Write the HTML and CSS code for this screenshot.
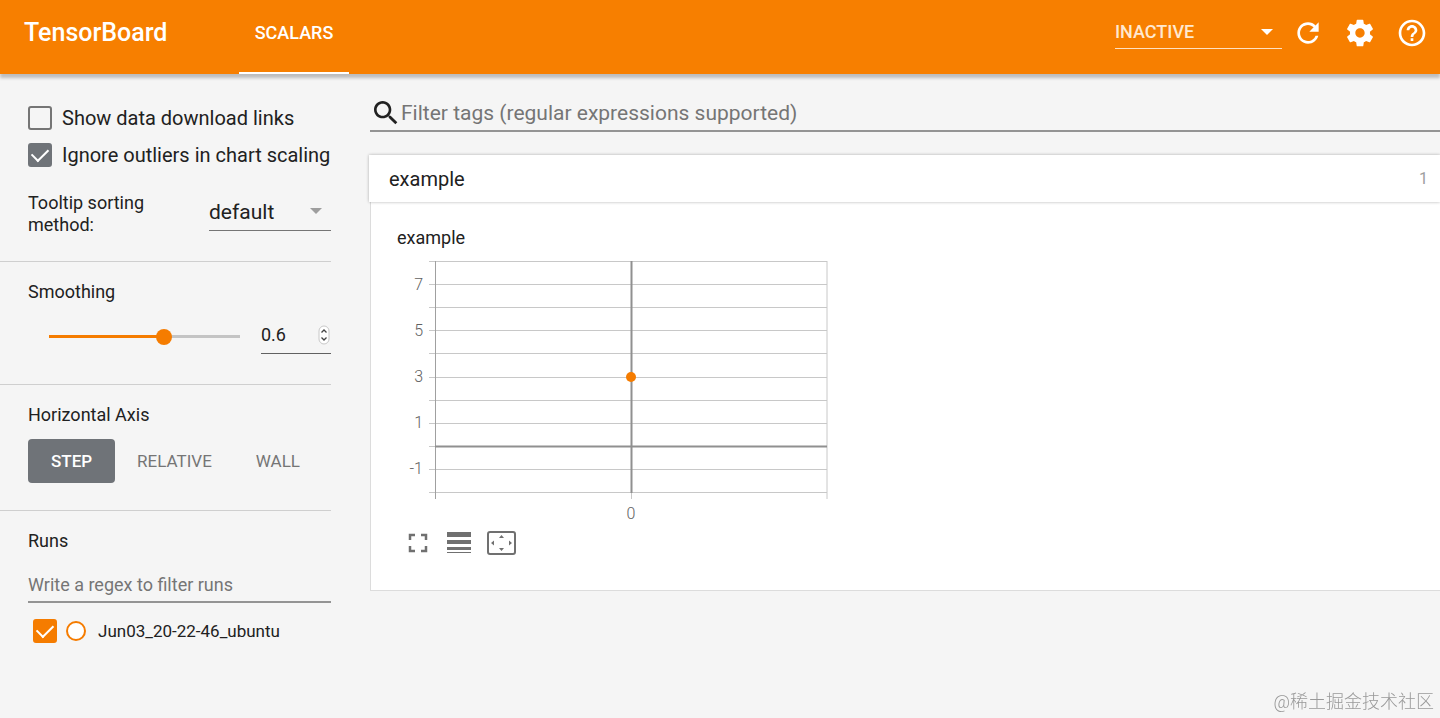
FILE: index.html
```html
<!DOCTYPE html>
<html lang="en">
<head>
    <meta charset="utf-8">
    <title>TensorBoard</title>
    <link rel="stylesheet" href="styles.css">
</head>
<body>
  <header class="toolbar">
    <h1 class="brand">TensorBoard</h1>
    <nav class="tabs">
      <a class="tab active" href="#scalars">SCALARS</a>
    </nav>
    <div class="dropdown inactive-menu">
      <select id="plugins" aria-label="Inactive plugins">
        <option>INACTIVE</option>
      </select>
      <svg class="arrow" viewBox="0 0 12 6"><path d="M0 0h12L6 6z"/></svg>
    </div>
    <div class="actions">
      <button type="button" aria-label="Reload">
        <svg viewBox="0 0 24 24"><path d="M17.65 6.35C16.2 4.9 14.21 4 12 4c-4.42 0-7.99 3.58-7.99 8s3.57 8 7.99 8c3.73 0 6.84-2.55 7.73-6h-2.08c-.82 2.33-3.04 4-5.65 4-3.31 0-6-2.69-6-6s2.69-6 6-6c1.66 0 3.14.69 4.22 1.78L13 11h7V4l-2.35 2.35z"/></svg>
      </button>
      <button type="button" aria-label="Settings">
        <svg viewBox="0 0 24 24"><path d="M19.43 12.98c.04-.32.07-.64.07-.98s-.03-.66-.07-.98l2.11-1.65c.19-.15.24-.42.12-.64l-2-3.46c-.12-.22-.39-.3-.61-.22l-2.49 1c-.52-.4-1.08-.73-1.69-.98l-.38-2.65C14.46 2.18 14.25 2 14 2h-4c-.25 0-.46.18-.49.42l-.38 2.65c-.61.25-1.17.59-1.69.98l-2.49-1c-.23-.09-.49 0-.61.22l-2 3.46c-.13.22-.07.49.12.64l2.11 1.65c-.04.32-.07.65-.07.98s.03.66.07.98l-2.11 1.65c-.19.15-.24.42-.12.64l2 3.46c.12.22.39.3.61.22l2.49-1c.52.4 1.08.73 1.69.98l.38 2.65c.03.24.24.42.49.42h4c.25 0 .46-.18.49-.42l.38-2.65c.61-.25 1.17-.59 1.69-.98l2.49 1c.23.09.49 0 .61-.22l2-3.46c.12-.22.07-.49-.12-.64l-2.11-1.65zM12 15.5c-1.93 0-3.5-1.57-3.5-3.5s1.57-3.5 3.5-3.5 3.5 1.57 3.5 3.5-1.57 3.5-3.5 3.5z"/></svg>
      </button>
      <button type="button" aria-label="Help">
        <svg viewBox="0 0 24 24"><path d="M11 18h2v-2h-2v2zm1-16C6.48 2 2 6.48 2 12s4.48 10 10 10 10-4.48 10-10S17.52 2 12 2zm0 18c-4.41 0-8-3.59-8-8s3.59-8 8-8 8 3.59 8 8-3.59 8-8 8zm0-14c-2.21 0-4 1.79-4 4h2c0-1.1.9-2 2-2s2 .9 2 2c0 2-3 1.75-3 5h2c0-2.25 3-2.5 3-5 0-2.21-1.79-4-4-4z"/></svg>
      </button>
    </div>
  </header>

  <div class="content">
    <aside class="sidebar">
      <section class="options">
        <div class="check-row">
          <input type="checkbox" id="downloadLinks">
          <label for="downloadLinks">Show data download links</label>
        </div>
        <div class="check-row">
          <input type="checkbox" id="outliers" checked>
          <label for="outliers">Ignore outliers in chart scaling</label>
        </div>
        <div class="tooltip-row">
          <label for="sorting">Tooltip sorting method:</label>
          <div class="dropdown sorting-menu">
            <select id="sorting">
              <option>default</option>
              <option>descending</option>
              <option>ascending</option>
              <option>nearest</option>
            </select>
            <svg class="arrow" viewBox="0 0 12 6"><path d="M0 0h12L6 6z"/></svg>
          </div>
        </div>
      </section>

      <section class="smoothing">
        <h3 id="smoothingTitle">Smoothing</h3>
        <div class="smoothing-row">
          <input type="range" id="smoothing" min="0" max="1" step="0.01" value="0.6" aria-labelledby="smoothingTitle">
          <div class="number">
            <input type="number" id="smoothingValue" min="0" max="1" step="0.1" value="0.6" aria-labelledby="smoothingTitle">
            <svg class="spinner" viewBox="0 0 12 20">
              <rect x="1" y="1" width="10" height="18" rx="5" fill="#fff" stroke="#c8c8c8"/>
              <path d="M3.5 7.5L6 5l2.5 2.5M3.5 12.5L6 15l2.5-2.5" fill="none" stroke="#444" stroke-width="1.3"/>
            </svg>
          </div>
        </div>
      </section>

      <section class="axis">
        <h3>Horizontal Axis</h3>
        <div class="axis-buttons">
          <button type="button" class="selected">STEP</button>
          <button type="button">RELATIVE</button>
          <button type="button">WALL</button>
        </div>
      </section>

      <section class="runs">
        <h3>Runs</h3>
        <input type="text" class="runs-filter" placeholder="Write a regex to filter runs" aria-label="Filter runs">
        <div class="run">
          <input type="checkbox" id="run1" checked>
          <span class="run-dot"></span>
          <label for="run1">Jun03_20-22-46_ubuntu</label>
        </div>
      </section>
    </aside>

    <main class="main">
      <div class="search">
        <svg viewBox="0 0 24 24"><path d="M15.5 14h-.79l-.28-.27C15.41 12.59 16 11.11 16 9.5 16 5.91 13.09 3 9.5 3S3 5.91 3 9.5 5.91 16 9.5 16c1.61 0 3.09-.59 4.23-1.57l.27.28v.79l5 4.99L20.49 19l-4.99-5zm-6 0C7.01 14 5 11.99 5 9.5S7.01 5 9.5 5 14 7.01 14 9.5 11.99 14 9.5 14z"/></svg>
        <input type="text" placeholder="Filter tags (regular expressions supported)" aria-label="Filter tags">
      </div>

      <button type="button" class="category">
        <span>example</span>
        <span class="count">1</span>
      </button>

      <div class="pane">
        <h2>example</h2>
        <svg class="chart" width="440" height="272" viewBox="0 0 440 272">
          <!-- grid -->
          <g class="grid">
            <path d="M32 9.5H430M32 32.5H430M32 55.5H430M32 78.5H430M32 101.5H430M32 125.5H430M32 148.5H430M32 171.5H430M32 194.5H430M32 217.5H430M32 240.5H430"/>
            <path d="M430 9V247M234.5 241V247"/>
          </g>
          <!-- axes -->
          <path class="edge" d="M38.5 9V247"/>
          <path class="zero" d="M38 194.500H430M234.5 9V241"/>
          <circle cx="234" cy="125" r="5"/>
          <g class="y-labels">
            <text x="26" y="38">7</text>
            <text x="26" y="84">5</text>
            <text x="26" y="130">3</text>
            <text x="26" y="176">1</text>
            <text x="26" y="222">-1</text>
          </g>
          <text class="x-label" x="234" y="267">0</text>
        </svg>
        <div class="chart-tools">
          <button type="button" aria-label="Fit to screen">
            <svg width="24" height="20" viewBox="0 0 24 20"><path d="M3 7V2h5M14 2h5v5M19 13v5h-5M8 18H3v-5" fill="none" stroke="#707070" stroke-width="2.5"/></svg>
          </button>
          <button type="button" aria-label="Toggle log scale">
            <svg width="24" height="22" viewBox="0 0 24 22"><path d="M0 0h24v5H0zM0 8h24v4H0zM0 15h24v3H0zM0 20h24v1H0z" fill="#707070"/></svg>
          </button>
          <button type="button" aria-label="Fit domain to data">
            <svg width="30" height="24" viewBox="0 0 30 24"><rect x="1" y="1" width="27" height="22" rx="2" fill="none" stroke="#707070" stroke-width="2"/><path d="M14.5 4l2.500 3h-5zM14.5 20l2.500-3h-5zM4 12l3-2.500v5zM25 12l-3-2.500v5z" fill="#707070"/></svg>
          </button>
        </div>
      </div>
    </main>
  </div>

  <div class="watermark">@稀土掘金技术社区</div>
</body>
</html>
```

FILE: styles.css
```css
* {
    box-sizing: border-box;
}

body {
    margin: 0;
    min-height: 100vh;
    background: #f5f5f5;
    color: #212121;
    font-family: Roboto, "Noto Sans CJK SC", sans-serif;
    font-size: 18px;
}

h1, h2, h3 {
    margin: 0;
    font-weight: 400;
}

button, input, select {
    font: inherit;
    color: inherit;
    margin: 0;
    padding: 0;
    border: 0;
    background: none;
}

button {
    cursor: pointer;
}

input::placeholder {
    color: #757575;
    opacity: 1;
}

/* toolbar */
.toolbar {
    display: flex;
    height: 74px;
    padding: 0 12px 0 24px;
    background: #f77f00;
    color: #fff;
    box-shadow: 0 4px 3px #bdbdbd;
}

.brand {
    width: 215px;
    padding-top: 17px;
    font-size: 25px;
    line-height: 32px;
    font-weight: 500;
}

.tabs {
    flex: 1;
    display: flex;
}

.tab {
    width: 110px;
    padding-top: 17px;
    border-bottom: 2px solid #fff;
    color: #fff;
    text-align: center;
    text-decoration: none;
    font-weight: 500;
    line-height: 32px;
}

.dropdown {
    position: relative;
}

.dropdown select {
    width: 100%;
    appearance: none;
}

.arrow {
    position: absolute;
    right: 9px;
    top: 50%;
    width: 12px;
    height: 6px;
    margin-top: -3px;
    fill: currentColor;
    pointer-events: none;
}

.inactive-menu {
    width: 167px;
    height: 34px;
    margin: 15px 10px 0 0;
    border-bottom: 1px solid #ffe0c0;
}

.inactive-menu select {
    height: 33px;
    color: #ffe8d0;
    font-weight: 500;
}

.actions {
    display: flex;
    gap: 20px;
    padding-top: 17px;
}

.actions button, .actions svg {
    display: block;
    width: 32px;
    height: 32px;
    fill: #fff;
}

.content {
    display: flex;
}

/* sidebar */
.sidebar {
    width: 331px;
    flex: none;
}

.sidebar section {
    padding-left: 28px;
    border-bottom: 1px solid #cfcfcf;
}

.sidebar h3 {
    font-size: 18px;
    line-height: 24px;
}

.sidebar .options {
    padding-top: 32px;
    padding-bottom: 25px;
}

.check-row {
    display: flex;
    align-items: center;
    gap: 10px;
    height: 24px;
    margin-bottom: 13px;
    font-size: 20px;
    white-space: nowrap;
}

input[type="checkbox"] {
    flex: none;
    display: grid;
    place-items: center;
    width: 24px;
    height: 24px;
    appearance: none;
    border: 2px solid #757575;
    border-radius: 3px;
}

input[type="checkbox"]:checked {
    background: #6f7378;
    border-color: #6f7378;
}

input[type="checkbox"]:checked::after {
    content: "";
    width: 8px;
    height: 14px;
    margin-bottom: 6px;
    border: solid #fff;
    border-width: 0 2px 2px 0;
    transform: rotate(45deg);
}

.tooltip-row {
    display: flex;
    justify-content: space-between;
    margin-top: 25px;
    line-height: 22px;
}

.tooltip-row label {
    width: 140px;
}

.sorting-menu {
    width: 122px;
    height: 39px;
    border-bottom: 1px solid #757575;
    font-size: 21px;
}

.sorting-menu select {
    height: 40px;
}

.sorting-menu .arrow {
    fill: #9e9e9e;
}

.sidebar .smoothing {
    padding-top: 18px;
    padding-bottom: 30px;
}

.smoothing-row {
    display: flex;
    align-items: center;
    justify-content: space-between;
    margin-top: 12px;
    padding-left: 13px;
}

input[type="range"] {
    width: 207px;
    height: 16px;
    margin-top: 3px;
    appearance: none;
    background: linear-gradient(to right, #f57c00 60%, #c4c4c4 60%) center / calc(100% - 16px) 3px no-repeat;
}

input[type="range"]::-webkit-slider-thumb {
    appearance: none;
    width: 16px;
    height: 16px;
    border-radius: 50%;
    background: #f57c00;
}

.number {
    position: relative;
    width: 70px;
    border-bottom: 1px solid #616161;
}

.number input {
    display: block;
    width: 100%;
    height: 37px;
    appearance: textfield;
}

.number input::-webkit-inner-spin-button {
    appearance: none;
}

.spinner {
    position: absolute;
    right: 1px;
    top: 9px;
    width: 12px;
    height: 20px;
    pointer-events: none;
}

.sidebar .axis {
    padding-top: 18px;
    padding-bottom: 27px;
}

.axis-buttons {
    display: flex;
    margin-top: 12px;
}

.axis-buttons button {
    height: 44px;
    padding: 0 22px;
    border-radius: 4px;
    color: #757575;
    font-size: 17px;
}

.axis-buttons .selected {
    padding: 0 23px;
    background: #6f7378;
    color: #fff;
    font-weight: 500;
}

.sidebar .runs {
    padding-top: 18px;
    border-bottom: 0;
}

.runs-filter {
    display: block;
    width: 100%;
    height: 34px;
    margin-top: 16px;
    padding-bottom: 2px;
    border-bottom: 2px solid #949494;
}

.run {
    display: flex;
    align-items: center;
    margin: 16px 0 0 5px;
    font-size: 17px;
}

.run input[type="checkbox"]:checked {
    background: #f57c00;
    border-color: #f57c00;
}

.run-dot {
    width: 20px;
    height: 20px;
    margin: 0 12px 0 9px;
    border: 2px solid #f57c00;
    border-radius: 50%;
    background: #fff;
}

/* main pane */
.main {
    flex: 1;
    padding: 22px 0 0 38px;
}

.search {
    display: flex;
    align-items: center;
    height: 36px;
    margin-left: 1px;
    border-bottom: 2px solid #949494;
    font-size: 21px;
}

.search svg {
    width: 32px;
    height: 32px;
    flex: none;
    margin-right: -1px;
    fill: #212121;
}

.search input {
    flex: 1;
    height: 32px;
}

.category {
    position: relative;
    display: flex;
    align-items: center;
    justify-content: space-between;
    width: 100%;
    height: 47px;
    margin-top: 23px;
    padding: 0 12px 0 20px;
    background: #fff;
    box-shadow: 0 0 3px rgba(0, 0, 0, 0.3);
    font-size: 20px;
}

.count {
    color: #9e9e9e;
    font-size: 16px;
}

.pane {
    height: 389px;
    margin-left: 1px;
    padding: 22px 26px;
    background: #fff;
    border: 1px solid #dcdcdc;
    border-width: 0 0 1px 1px;
}

.pane h2 {
    font-size: 18px;
    line-height: 28px;
}

.chart {
    display: block;
    fill: #616161;
    font-weight: 300;
    font-size: 16px;
}

.chart path {
    fill: none;
}

.grid {
    stroke: #c8c8c8;
}

.edge {
    stroke: #a0a0a0;
}

.zero {
    stroke: #909090;
    stroke-width: 2px;
}

.chart circle {
    fill: #f57c00;
}

.y-labels {
    text-anchor: end;
}

.x-label {
    text-anchor: middle;
}

.chart-tools {
    display: flex;
    align-items: center;
    gap: 16px;
    height: 38px;
    margin-left: 10px;
}

.chart-tools button, .chart-tools svg {
    display: block;
}

.watermark {
    position: fixed;
    right: 6px;
    bottom: 4px;
    color: #999;
    font-size: 18px;
    font-weight: 300;
    line-height: 24px;
}
```
